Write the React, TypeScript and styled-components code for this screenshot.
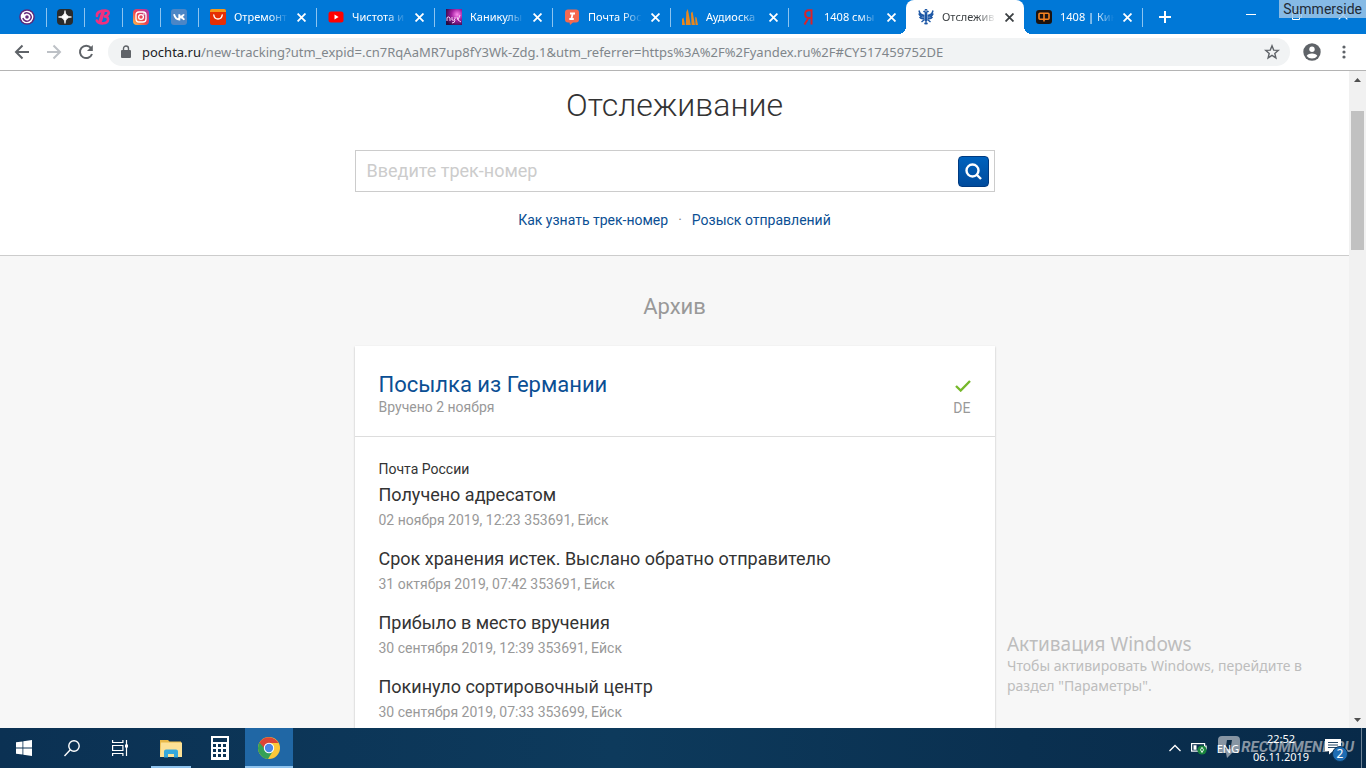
import React from "react";
import styled, { createGlobalStyle, css } from "styled-components";

const GlobalStyle = createGlobalStyle`
  * { box-sizing: border-box; }
  html, body { margin: 0; padding: 0; }
  body { font-family: Roboto, "Liberation Sans", sans-serif; color: #333; }
  button { font: inherit; color: inherit; background: none; border: 0; padding: 0; margin: 0; cursor: pointer; }
  h1, h2, h3, p, ul, ol { margin: 0; padding: 0; font-weight: 400; }
  ul, ol { list-style: none; }
  svg { display: block; flex: none; }
`;

const system = css`
  font-family: "Noto Sans", "Open Sans", sans-serif;
`;

const Screen = styled.div`
  position: relative;
  display: flex;
  flex-direction: column;
  height: 100vh;
  overflow: hidden;
  background: #fff;
`;

/* ---------- browser tabs ---------- */

const TabStrip = styled.nav`
  ${system}
  flex: none;
  display: flex;
  align-items: stretch;
  height: 34px;
  padding-left: 8px;
  background: #0078d7;
  color: #fff;
  font-size: 11px;
`;

const divider = css`
  &::after {
    content: "";
    position: absolute;
    right: -1px;
    top: 8px;
    width: 1px;
    height: 19px;
    background: #8cc4f0;
  }
`;

const PinnedTab = styled.button`
  position: relative;
  display: flex;
  align-items: center;
  justify-content: center;
  width: 38px;
  ${divider}
`;

const Tab = styled.div<{ $active?: boolean; $divider?: boolean }>`
  position: relative;
  display: flex;
  align-items: center;
  width: 118px;
  padding: 0 8px 0 12px;
  ${(p) =>
    p.$active &&
    css`
      background: #fff;
      color: #3c4043;
      border-radius: 8px 8px 0 0;
      &::before {
        content: "";
        position: absolute;
        left: -8px;
        right: -8px;
        bottom: 0;
        height: 8px;
        background:
          radial-gradient(circle at 0 0, transparent 8px, #fff 8px) left / 8px 8px no-repeat,
          radial-gradient(circle at 100% 0, transparent 8px, #fff 8px) right / 8px 8px no-repeat;
      }
    `}
  ${(p) => p.$divider && divider}
`;

const TabTitle = styled.button`
  flex: 1;
  display: flex;
  align-items: center;
  gap: 8px;
  min-width: 0;
`;

const TabText = styled.span`
  flex: 1;
  overflow: hidden;
  white-space: nowrap;
  text-align: left;
  line-height: 18px;
  mask-image: linear-gradient(to right, #000 65%, transparent 100%);
`;

const TabClose = styled.button`
  flex: none;
  width: 14px;
  height: 14px;
  margin-left: 6px;
  display: flex;
  align-items: center;
  justify-content: center;
`;

const NewTab = styled.button`
  width: 46px;
  display: flex;
  align-items: center;
  justify-content: center;
`;

const WindowControls = styled.div`
  display: flex;
  margin-left: auto;
  height: 29px;
`;

const WindowButton = styled.button`
  width: 46px;
  display: flex;
  align-items: center;
  justify-content: center;
`;

const UserTag = styled.div`
  position: absolute;
  top: 0;
  right: 0;
  padding: 0 4px;
  font-size: 14px;
  line-height: 18px;
  color: #1f2a36;
  background: rgba(158, 198, 232, 0.85);
`;

/* ---------- toolbar ---------- */

const Toolbar = styled.div`
  ${system}
  flex: none;
  display: flex;
  align-items: center;
  height: 37px;
  padding: 0 6px;
  border-bottom: 1px solid #b4b4b4;
  background: #fff;
`;

const ToolButton = styled.button`
  flex: none;
  width: 32px;
  height: 28px;
  display: flex;
  align-items: center;
  justify-content: center;
`;

const AddressBar = styled.label`
  flex: 1;
  display: flex;
  align-items: center;
  min-width: 0;
  height: 28px;
  margin: 0 6px;
  padding: 0 2px 0 13px;
  border-radius: 14px;
  background: #f1f3f4;
  font-size: 13px;
  line-height: 20px;
  color: #202124;
  & > svg { margin-right: 11px; }
`;

const AddressInput = styled.input`
  flex: 1;
  min-width: 0;
  border: 0;
  padding: 0;
  outline: 0;
  background: none;
  font: inherit;
  color: #80868b;
`;

/* ---------- web page ---------- */

const Viewport = styled.div`
  flex: 1;
  display: flex;
  min-height: 0;
`;

const Page = styled.main`
  flex: 1;
  min-width: 0;
  overflow: hidden;
  background: #f7f7f7;
`;

const SearchSection = styled.section`
  display: flex;
  flex-direction: column;
  align-items: center;
  padding: 14px 0 25px;
  border-bottom: 1px solid #ccc;
  background: #fff;
`;

const PageTitle = styled.h1`
  font-size: 32px;
  line-height: 40px;
  font-weight: 300;
`;

const SearchForm = styled.form`
  display: flex;
  align-items: center;
  width: 100%;
  max-width: 640px;
  height: 42px;
  margin-top: 25px;
  padding: 0 5px 0 11px;
  border: 1px solid #ccc;
  background: #fff;
`;

const SearchInput = styled.input`
  flex: 1;
  min-width: 0;
  border: 0;
  padding: 0;
  outline: 0;
  font: inherit;
  font-size: 18px;
  line-height: 24px;
  &::placeholder { color: #ccc; opacity: 1; }
`;

const SearchButton = styled.button`
  width: 31px;
  height: 31px;
  display: flex;
  align-items: center;
  justify-content: center;
  border: 1px solid #003a80;
  border-radius: 4px;
  background: linear-gradient(#0062bd, #004b9c);
`;

const Links = styled.p`
  display: flex;
  margin-top: 18px;
  gap: 10px;
  font-size: 14px;
  line-height: 20px;
  color: #888;
`;

const Link = styled.a`
  color: #0b4f94;
  text-decoration: none;
`;

const ArchiveSection = styled.section`
  display: flex;
  flex-direction: column;
  align-items: center;
`;

const ArchiveTitle = styled.h2`
  margin: 36px 0 24px;
  font-size: 22px;
  line-height: 30px;
  color: #999;
`;

const Card = styled.article`
  width: 100%;
  max-width: 640px;
  background: #fff;
  box-shadow: 0 1px 2px rgba(0, 0, 0, 0.25);
`;

const CardHeader = styled.header`
  display: flex;
  justify-content: space-between;
  height: 91px;
  padding: 27px 24px 0;
  border-bottom: 1px solid #ddd;
`;

const ParcelName = styled.h3`
  font-size: 22px;
  line-height: 24px;
  color: #0b4f94;
`;

const Muted = styled.p`
  font-size: 14px;
  line-height: 20px;
  color: #999;
`;

const Status = styled.div`
  display: flex;
  flex-direction: column;
  align-items: flex-end;
  padding-top: 7px;
  gap: 6px;
`;

const History = styled.div`
  padding: 22px 24px;
`;

const Carrier = styled.p`
  font-size: 14px;
  line-height: 20px;
`;

const Event = styled.li`
  height: 64px;
  padding-top: 4px;
`;

const EventTitle = styled.p`
  margin-bottom: 3px;
  font-size: 18px;
  line-height: 24px;
`;

const Scrollbar = styled.div`
  flex: none;
  display: flex;
  flex-direction: column;
  align-items: center;
  justify-content: space-between;
  width: 17px;
  background: #f1f1f1;
`;

const ScrollArrow = styled.button`
  width: 17px;
  height: 17px;
  display: flex;
  align-items: center;
  justify-content: center;
`;

const ScrollTrack = styled.div`
  flex: 1;
  padding-top: 23px;
`;

const ScrollThumb = styled.div`
  width: 13px;
  height: 139px;
  background: #c1c1c1;
`;

const Activation = styled.aside`
  ${system}
  position: absolute;
  right: 40px;
  bottom: 72px;
  width: 319px;
  font-size: 14px;
  line-height: 20px;
  color: #bdbdbd;
`;

const ActivationTitle = styled.p`
  font-size: 19px;
  line-height: 24px;
`;

/* ---------- taskbar ---------- */

const Taskbar = styled.footer`
  ${system}
  flex: none;
  display: flex;
  height: 40px;
  background: linear-gradient(90deg, #0b3153, #0d3a5c 45%, #0a3050 75%, #082a49);
  color: #fff;
  font-size: 11px;
`;

const TaskButton = styled.button<{ $active?: boolean; $open?: boolean }>`
  position: relative;
  width: 48px;
  display: flex;
  align-items: center;
  justify-content: center;
  background: ${(p) => (p.$active ? "#2067a5" : "none")};
  &::after {
    content: "";
    position: absolute;
    bottom: 0;
    left: ${(p) => (p.$active ? "0" : "4px")};
    right: ${(p) => (p.$active ? "0" : "4px")};
    height: ${(p) => (p.$active || p.$open ? "2px" : "0")};
    background: #8ec3ee;
  }
`;

const Apps = styled.div`
  display: flex;
  gap: 1px;
  margin-left: 3px;
`;

const Tray = styled.div`
  position: relative;
  z-index: 0;
  display: flex;
  align-items: center;
  margin-left: auto;
`;

const TrayButton = styled.button`
  display: flex;
  align-items: center;
  justify-content: center;
  width: 24px;
  height: 40px;
`;

const Language = styled.button`
  width: 34px;
  height: 40px;
`;

const Clock = styled.time`
  width: 64px;
  margin-left: 4px;
  line-height: 18px;
  text-align: center;
`;

const Notifications = styled.button`
  width: 49px;
  height: 40px;
  padding-left: 11px;
  border-right: 1px solid #6d8296;
  margin-right: 4px;
`;

const SiteMark = styled.div`
  position: absolute;
  z-index: -1;
  right: 12px;
  top: 8px;
  display: flex;
  align-items: center;
  gap: 1px;
  font-family: Roboto, "Liberation Sans", sans-serif;
  font-size: 15px;
  line-height: 22px;
  font-weight: 700;
  font-style: italic;
  color: #8795a3;
`;

/* ---------- icons ---------- */

const Cross = ({ size = 9, width = 1.6 }: { size?: number; width?: number }) => (
  <svg width={size} height={size} viewBox="0 0 8 8" stroke="currentColor" strokeWidth={width}>
    <path d="M.5.5l7 7M7.5.5l-7 7" />
  </svg>
);

const icon = { width: 16, height: 16, viewBox: "0 0 16 16" };

const icons = {
  swirl: (
    <svg {...icon}>
      <circle cx="8" cy="8" r="7.800" fill="#5b2a7c" />
      <circle cx="8" cy="8" r="6.300" fill="#fff" />
      <path d="M5.200 4.900A4.200 4.200 0 1 1 3.900 9" fill="none" stroke="#6a2c7e" strokeWidth="1.500" />
      <circle cx="8" cy="8" r="1.800" fill="#6a2c7e" />
    </svg>
  ),
  star: (
    <svg {...icon}>
      <rect width="16" height="16" rx="4" fill="#2b2b2b" />
      <path d="M8 1.500Q8.300 7.700 14.500 8Q8.300 8.300 8 14.500Q7.700 8.300 1.500 8Q7.700 7.700 8 1.500Z" fill="#fff" stroke="#fff" strokeWidth=".7" />
    </svg>
  ),
  beauty: (
    <svg {...icon} fill="none" stroke="#f0307f" strokeLinecap="round">
      <path d="M2 7C1.500 3 6 1.500 10.500 1.500C15.500 1.800 14.500 6.500 9 7.500C15 7 14 14 8.500 14.300C5 14.500 2.500 13.500 1.800 11.500" strokeWidth="2.600" />
      <path d="M8 3.500L5.300 12" strokeWidth="3.600" />
    </svg>
  ),
  instagram: (
    <svg {...icon}>
      <defs>
        <linearGradient id="insta" x1="0" y1="1" x2="1" y2="0">
          <stop offset="0" stopColor="#fdc34a" />
          <stop offset=".45" stopColor="#f0454c" />
          <stop offset="1" stopColor="#a034b8" />
        </linearGradient>
      </defs>
      <rect width="16" height="16" rx="4" fill="url(#insta)" />
      <rect x="3" y="3" width="10" height="10" rx="3" fill="none" stroke="#fff" strokeWidth="1.300" />
      <circle cx="8" cy="8" r="2.400" fill="none" stroke="#fff" strokeWidth="1.300" />
      <circle cx="10.900" cy="5.100" r=".8" fill="#fff" />
    </svg>
  ),
  vk: (
    <svg {...icon}>
      <rect width="16" height="16" rx="3" fill="#4c86c6" />
      <path d="M3 5.300Q4.500 10.500 8.300 10.600V5.300M13 5.300Q12 7.400 8.600 8Q12 8.500 13.300 10.700" fill="none" stroke="#fff" strokeWidth="1.900" />
    </svg>
  ),
  ali: (
    <svg {...icon}>
      <rect width="16" height="16" rx="2" fill="#e62e04" />
      <path d="M2 0h12a2 2 0 0 1 2 2v1H0V2a2 2 0 0 1 2-2z" fill="#f59a1b" />
      <path d="M3.800 6Q4.300 10 8 10T12.200 6" fill="none" stroke="#fff" strokeWidth="1.400" strokeLinecap="round" />
    </svg>
  ),
  youtube: (
    <svg {...icon}>
      <rect x=".5" y="2.500" width="15" height="11" rx="2.500" fill="#f00" />
      <path d="M6.500 5.600v4.800L10.600 8z" fill="#fff" />
    </svg>
  ),
  show: (
    <svg {...icon}>
      <defs>
        <radialGradient id="glow" cx=".7" cy=".35" r=".8">
          <stop offset="0" stopColor="#ff8af0" />
          <stop offset=".45" stopColor="#a21fa0" />
          <stop offset="1" stopColor="#280a40" />
        </radialGradient>
      </defs>
      <rect width="16" height="16" fill="url(#glow)" />
      <path d="M1 12V8.500Q3 7 4 9v3M6 8v3q2 1 3-1V8m0 3q0 3-3 3M11 8l1 3 2-5M12 11l3 2" fill="none" stroke="#f6cdf5" strokeWidth="1" />
    </svg>
  ),
  irec: (
    <svg {...icon}>
      <path d="M4 .5h8a3 3 0 0 1 3 3v7a3 3 0 0 1-3 3H9L6 16l-.5-2.500H4a3 3 0 0 1-3-3v-7a3 3 0 0 1 3-3z" fill="#f4694f" />
      <path d="M6 4.500h5M5.300 10h4.500M8.800 4l-1.400 6" stroke="#fff" strokeWidth="1.800" />
    </svg>
  ),
  audio: (
    <svg {...icon} fill="#e8871e">
      <path d="M0 16V10l1.500-1.500L3 16zM3.800 16L4.300 3 5.800 0l3 16zM9.600 16L9 4l1.500-1.500L13 16zM13.500 16l-.3-8 1.300.5L16 16z" />
    </svg>
  ),
  yandex: (
    <svg {...icon} fill="none" stroke="#d8232a">
      <path d="M11.500 15.500V1.200H9C6.500 1.200 5.200 2.800 5.200 5s1.300 3.900 3.800 3.900h2.500M8.600 8.800L4.500 15.500" strokeWidth="2" />
    </svg>
  ),
  eagle: (
    <svg {...icon} fill="none" stroke="#1d57a5">
      <path d="M5.500 3Q7 1 7.400 4V12M10.500 3Q9 1 8.600 4V12M7 1.300L8 .3 9 1.300" strokeWidth="1.400" />
      <path d="M6.500 6.500Q2 6.500 1 1.500M6.500 8Q2.500 8.500.8 4.500M6.500 9.500Q3.500 10.500 1.500 8M9.500 6.500Q14 6.500 15 1.500M9.500 8Q13.500 8.500 15.200 4.500M9.500 9.500Q12.500 10.500 14.500 8" strokeWidth="1.500" />
      <path d="M6.500 10.500L3.500 13M9.500 10.500L12.500 13M8 11v4.500M6.300 14.500h3.400" strokeWidth="1.400" />
    </svg>
  ),
  film: (
    <svg {...icon}>
      <rect y="1" width="16" height="14" rx="3" fill="#1b1310" />
      <rect x="3" y="4.300" width="10" height="6" rx="1" fill="none" stroke="#f58220" strokeWidth="1.600" />
      <path d="M8 4v8.500" stroke="#f58220" strokeWidth="1.600" />
    </svg>
  ),
};

const pinned = [
  { name: "Закладка", icon: icons.swirl },
  { name: "Звезда", icon: icons.star },
  { name: "Красота", icon: icons.beauty },
  { name: "Instagram", icon: icons.instagram },
  { name: "ВКонтакте", icon: icons.vk },
];

const tabs = [
  { title: "Отремонт", icon: icons.ali, divider: true },
  { title: "Чистота и", icon: icons.youtube, divider: true },
  { title: "Каникулы", icon: icons.show, divider: true },
  { title: "Почта Рос", icon: icons.irec, divider: true },
  { title: "Аудиоска", icon: icons.audio, divider: true },
  { title: "1408 смы", icon: icons.yandex },
  { title: "Отслежив", icon: icons.eagle, active: true },
  { title: "1408 | Кин", icon: icons.film, divider: true },
];

const events = [
  ["Получено адресатом", "02 ноября 2019, 12:23 353691, Ейск"],
  ["Срок хранения истек. Выслано обратно отправителю", "31 октября 2019, 07:42 353691, Ейск"],
  ["Прибыло в место вручения", "30 сентября 2019, 12:39 353691, Ейск"],
  ["Покинуло сортировочный центр", "30 сентября 2019, 07:33 353699, Ейск"],
];

const BrowserTabs = () => (
  <TabStrip aria-label="Вкладки">
    {pinned.map((p) => (
      <PinnedTab key={p.name} aria-label={p.name}>
        {p.icon}
      </PinnedTab>
    ))}
    {tabs.map((t) => (
      <Tab key={t.title} $active={t.active} $divider={t.divider}>
        <TabTitle>
          {t.icon}
          <TabText>{t.title}</TabText>
        </TabTitle>
        <TabClose aria-label="Закрыть вкладку">
          <Cross />
        </TabClose>
      </Tab>
    ))}
    <NewTab aria-label="Новая вкладка">
      <svg width="12" height="12" stroke="#fff" strokeWidth="2">
        <path d="M6 0v12M0 6h12" />
      </svg>
    </NewTab>
    <WindowControls>
      <WindowButton aria-label="Свернуть">
        <svg width="10" height="10" stroke="#fff">
          <path d="M0 4.500h10" />
        </svg>
      </WindowButton>
      <WindowButton aria-label="Развернуть">
        <svg width="10" height="10" stroke="#fff" fill="none">
          <path d="M.5 2.500h7v7h-7zM2.500 2.500v-2h7v7h-2" />
        </svg>
      </WindowButton>
      <WindowButton aria-label="Закрыть">
        <Cross size={10} width={0.9} />
      </WindowButton>
    </WindowControls>
  </TabStrip>
);

const BrowserToolbar = () => (
  <Toolbar>
    <ToolButton aria-label="Назад">
      <svg width="16" height="16" fill="none" stroke="#5f6368" strokeWidth="2">
        <path d="M15 8H2M8.500 1.500L2 8l6.500 6.500" />
      </svg>
    </ToolButton>
    <ToolButton aria-label="Вперёд">
      <svg width="16" height="16" fill="none" stroke="#bdc1c6" strokeWidth="2">
        <path d="M1 8h13M7.500 1.500L14 8l-6.500 6.500" />
      </svg>
    </ToolButton>
    <ToolButton aria-label="Обновить">
      <svg width="16" height="16" fill="none" stroke="#5f6368" strokeWidth="2">
        <path d="M13 4A6.200 6.200 0 1 0 14 10" />
        <path d="M14.800 1v6H9z" fill="#5f6368" stroke="none" />
      </svg>
    </ToolButton>
    <AddressBar htmlFor="address">
      <svg width="10" height="14" viewBox="0 0 10 14">
        <rect x="0" y="5" width="10" height="8" rx="1" fill="#5f6368" />
        <path d="M2.500 5.500V3.500a2.500 2.500 0 0 1 5 0v2" fill="none" stroke="#5f6368" strokeWidth="1.400" />
      </svg>
      <span>pochta.ru</span>
      <AddressInput
        id="address"
        spellCheck={false}
        defaultValue="/new-tracking?utm_expid=.cn7RqAaMR7up8fY3Wk-Zdg.1&utm_referrer=https%3A%2F%2Fyandex.ru%2F#CY517459752DE"
      />
      <ToolButton aria-label="Добавить в закладки">
        <svg width="16" height="16" fill="none" stroke="#5f6368" strokeWidth="1.400">
          <path d="M8 1.800l1.700 4.300 4.600.3-3.500 3 1.100 4.500L8 11.400l-3.900 2.500 1.100-4.500-3.500-3 4.600-.3z" />
        </svg>
      </ToolButton>
    </AddressBar>
    <ToolButton aria-label="Профиль">
      <svg width="18" height="18">
        <circle cx="9" cy="9" r="8.700" fill="#5f6368" />
        <circle cx="9" cy="6.300" r="2.700" fill="#fff" />
        <path d="M3.700 13Q4.500 10.500 9 10.500t5.300 2.500Q12.300 15.600 9 15.600T3.700 13z" fill="#fff" />
      </svg>
    </ToolButton>
    <ToolButton aria-label="Меню">
      <svg width="4" height="14" fill="#5f6368">
        <circle cx="2" cy="2" r="1.600" />
        <circle cx="2" cy="7" r="1.600" />
        <circle cx="2" cy="12" r="1.600" />
      </svg>
    </ToolButton>
  </Toolbar>
);

const TrackingPage = () => (
  <Page>
    <SearchSection>
      <PageTitle>Отслеживание</PageTitle>
      <SearchForm onSubmit={(e) => e.preventDefault()}>
        <SearchInput aria-label="Введите трек-номер" placeholder="Введите трек-номер" />
        <SearchButton aria-label="Найти">
          <svg width="18" height="18" fill="none" stroke="#fff" strokeWidth="2.400">
            <circle cx="8.500" cy="8.500" r="6" />
            <path d="M12.500 12.500l4.500 4.500" />
          </svg>
        </SearchButton>
      </SearchForm>
      <Links>
        <Link href="#number">Как узнать трек-номер</Link>
        <span>·</span>
        <Link href="#search">Розыск отправлений</Link>
      </Links>
    </SearchSection>
    <ArchiveSection>
      <ArchiveTitle>Архив</ArchiveTitle>
      <Card>
        <CardHeader>
          <div>
            <ParcelName>Посылка из Германии</ParcelName>
            <Muted>Вручено 2 ноября</Muted>
          </div>
          <Status>
            <svg width="16" height="12" fill="none" stroke="#76b82a" strokeWidth="2.400">
              <path d="M1 6l4.700 4.500L15 1" />
            </svg>
            <Muted>DE</Muted>
          </Status>
        </CardHeader>
        <History>
          <Carrier>Почта России</Carrier>
          <ol>
            {events.map(([title, meta]) => (
              <Event key={title}>
                <EventTitle>{title}</EventTitle>
                <Muted>{meta}</Muted>
              </Event>
            ))}
          </ol>
        </History>
      </Card>
    </ArchiveSection>
  </Page>
);

const WindowsTaskbar = () => (
  <Taskbar>
    <TaskButton aria-label="Пуск">
      <svg width="16" height="16" fill="#fff">
        <path d="M0 2.300L6.500 1.400V7.600H0zM7.300 1.300L16 0v7.600H7.300zM0 8.400h6.500v6.200L0 13.700zM7.300 8.400H16V16l-8.700-1.300z" />
      </svg>
    </TaskButton>
    <TaskButton aria-label="Поиск">
      <svg width="16" height="17" fill="none" stroke="#fff" strokeWidth="1.400">
        <circle cx="10" cy="6" r="5.200" />
        <path d="M6.300 9.800L.5 16" />
      </svg>
    </TaskButton>
    <TaskButton aria-label="Представление задач">
      <svg width="17" height="16" fill="none" stroke="#fff" strokeWidth="1.200">
        <path d="M.6 0v2.500h10.300V0M.6 5.500h10.300v5H.6zM.6 16v-2.500h10.300V16M14.500 0v16" />
        <path d="M13 4.500h3v3h-3z" fill="#fff" stroke="none" />
      </svg>
    </TaskButton>
    <Apps>
      <TaskButton aria-label="Проводник" $open>
        <svg width="22" height="19">
          <path d="M0 1h8l1.500 1.500H21V18H0z" fill="#e9b949" />
          <path d="M1 3.500h21V18H0z" fill="#fce196" />
          <path d="M4 18.500v-6a2 2 0 0 1 2-2h10a2 2 0 0 1 2 2v6h-4V15H8v3.500z" fill="#35a8dc" />
        </svg>
      </TaskButton>
      <TaskButton aria-label="Калькулятор">
        <svg width="18" height="24">
          <rect width="18" height="24" fill="#fff" />
          <path
            d="M2 2h14v4H2zM2 8h3v3H2zM7 8h3v3H7zM12 8h3v3h-3zM2 13h3v3H2zM7 13h3v3H7zM12 13h3v3h-3zM2 18h3v3H2zM7 18h3v3H7zM12 18h3v3h-3z"
            fill="#0b3355"
          />
        </svg>
      </TaskButton>
      <TaskButton aria-label="Google Chrome" $active>
        <svg width="22" height="22" viewBox="0 0 22 22">
          <circle cx="11" cy="11" r="11" fill="#fbc73a" />
          <path d="M11 11L1.500 5.500A11 11 0 0 0 10 22l5.300-8.500z" fill="#35a056" />
          <path d="M11 11H6L1.500 5.500A11 11 0 0 1 20.500 6H11z" fill="#db4437" />
          <circle cx="11" cy="11" r="5.200" fill="#fff" />
          <circle cx="11" cy="11" r="4.200" fill="#4a86e8" />
        </svg>
      </TaskButton>
    </Apps>
    <Tray>
      <TrayButton aria-label="Скрытые значки">
        <svg width="12" height="8" fill="none" stroke="#fff" strokeWidth="1.300">
          <path d="M.5 7L6 1.500 11.500 7" />
        </svg>
      </TrayButton>
      <TrayButton aria-label="Батарея">
        <svg width="17" height="14">
          <rect x=".6" y="2.600" width="13" height="7.500" fill="none" stroke="#fff" strokeWidth="1.200" />
          <path d="M2.500 4.200h3v4.500h-3zM14.200 4.500h1.500v4h-1.500z" fill="#fff" />
          <circle cx="11" cy="9" r="4.600" fill="#18843c" />
          <path d="M11 6.300l1.500 2.500L11 11.500 9.500 8.800z" fill="none" stroke="#fff" strokeWidth=".9" />
        </svg>
      </TrayButton>
      <Language>ENG</Language>
      <Clock>
        22:52
        <br />
        06.11.2019
      </Clock>
      <Notifications aria-label="Уведомления">
        <svg width="26" height="28">
          <path d="M1 5h16v12H9l-4 3.500V17H1z" fill="#fff" />
          <path d="M4 8.500h10M4 11h10M4 13.500h10" stroke="#0b3355" strokeWidth=".9" />
          <circle cx="16" cy="20" r="7.500" fill="#1f6db3" stroke="#0b3355" />
          <text x="16" y="24" textAnchor="middle" fontSize="12" fill="#fff">
            2
          </text>
        </svg>
      </Notifications>
      <SiteMark>
        <svg width="22" height="22">
          <path d="M4 0h14a4 4 0 0 1 4 4v9a4 4 0 0 1-4 4h-4l-5 5-1-5H4a4 4 0 0 1-4-4V4a4 4 0 0 1 4-4z" fill="#8795a3" />
          <path d="M9 4h5l-1.500 9h-5z" fill="#0c2c47" />
        </svg>
        RECOMMEND.RU
      </SiteMark>
    </Tray>
  </Taskbar>
);

export default function App() {
  return (
    <>
      <GlobalStyle />
      <Screen>
        <BrowserTabs />
        <BrowserToolbar />
        <Viewport>
          <TrackingPage />
          <Scrollbar>
            <ScrollArrow aria-label="Вверх">
              <svg width="7" height="4" fill="#505050">
                <path d="M0 4l3.500-4L7 4z" />
              </svg>
            </ScrollArrow>
            <ScrollTrack>
              <ScrollThumb />
            </ScrollTrack>
            <ScrollArrow aria-label="Вниз">
              <svg width="7" height="4" fill="#505050">
                <path d="M0 0l3.500 4L7 0z" />
              </svg>
            </ScrollArrow>
          </Scrollbar>
        </Viewport>
        <WindowsTaskbar />
        <Activation>
          <ActivationTitle>Активация Windows</ActivationTitle>
          <p>Чтобы активировать Windows, перейдите в раздел "Параметры".</p>
        </Activation>
        <UserTag>Summerside</UserTag>
      </Screen>
    </>
  );
}
